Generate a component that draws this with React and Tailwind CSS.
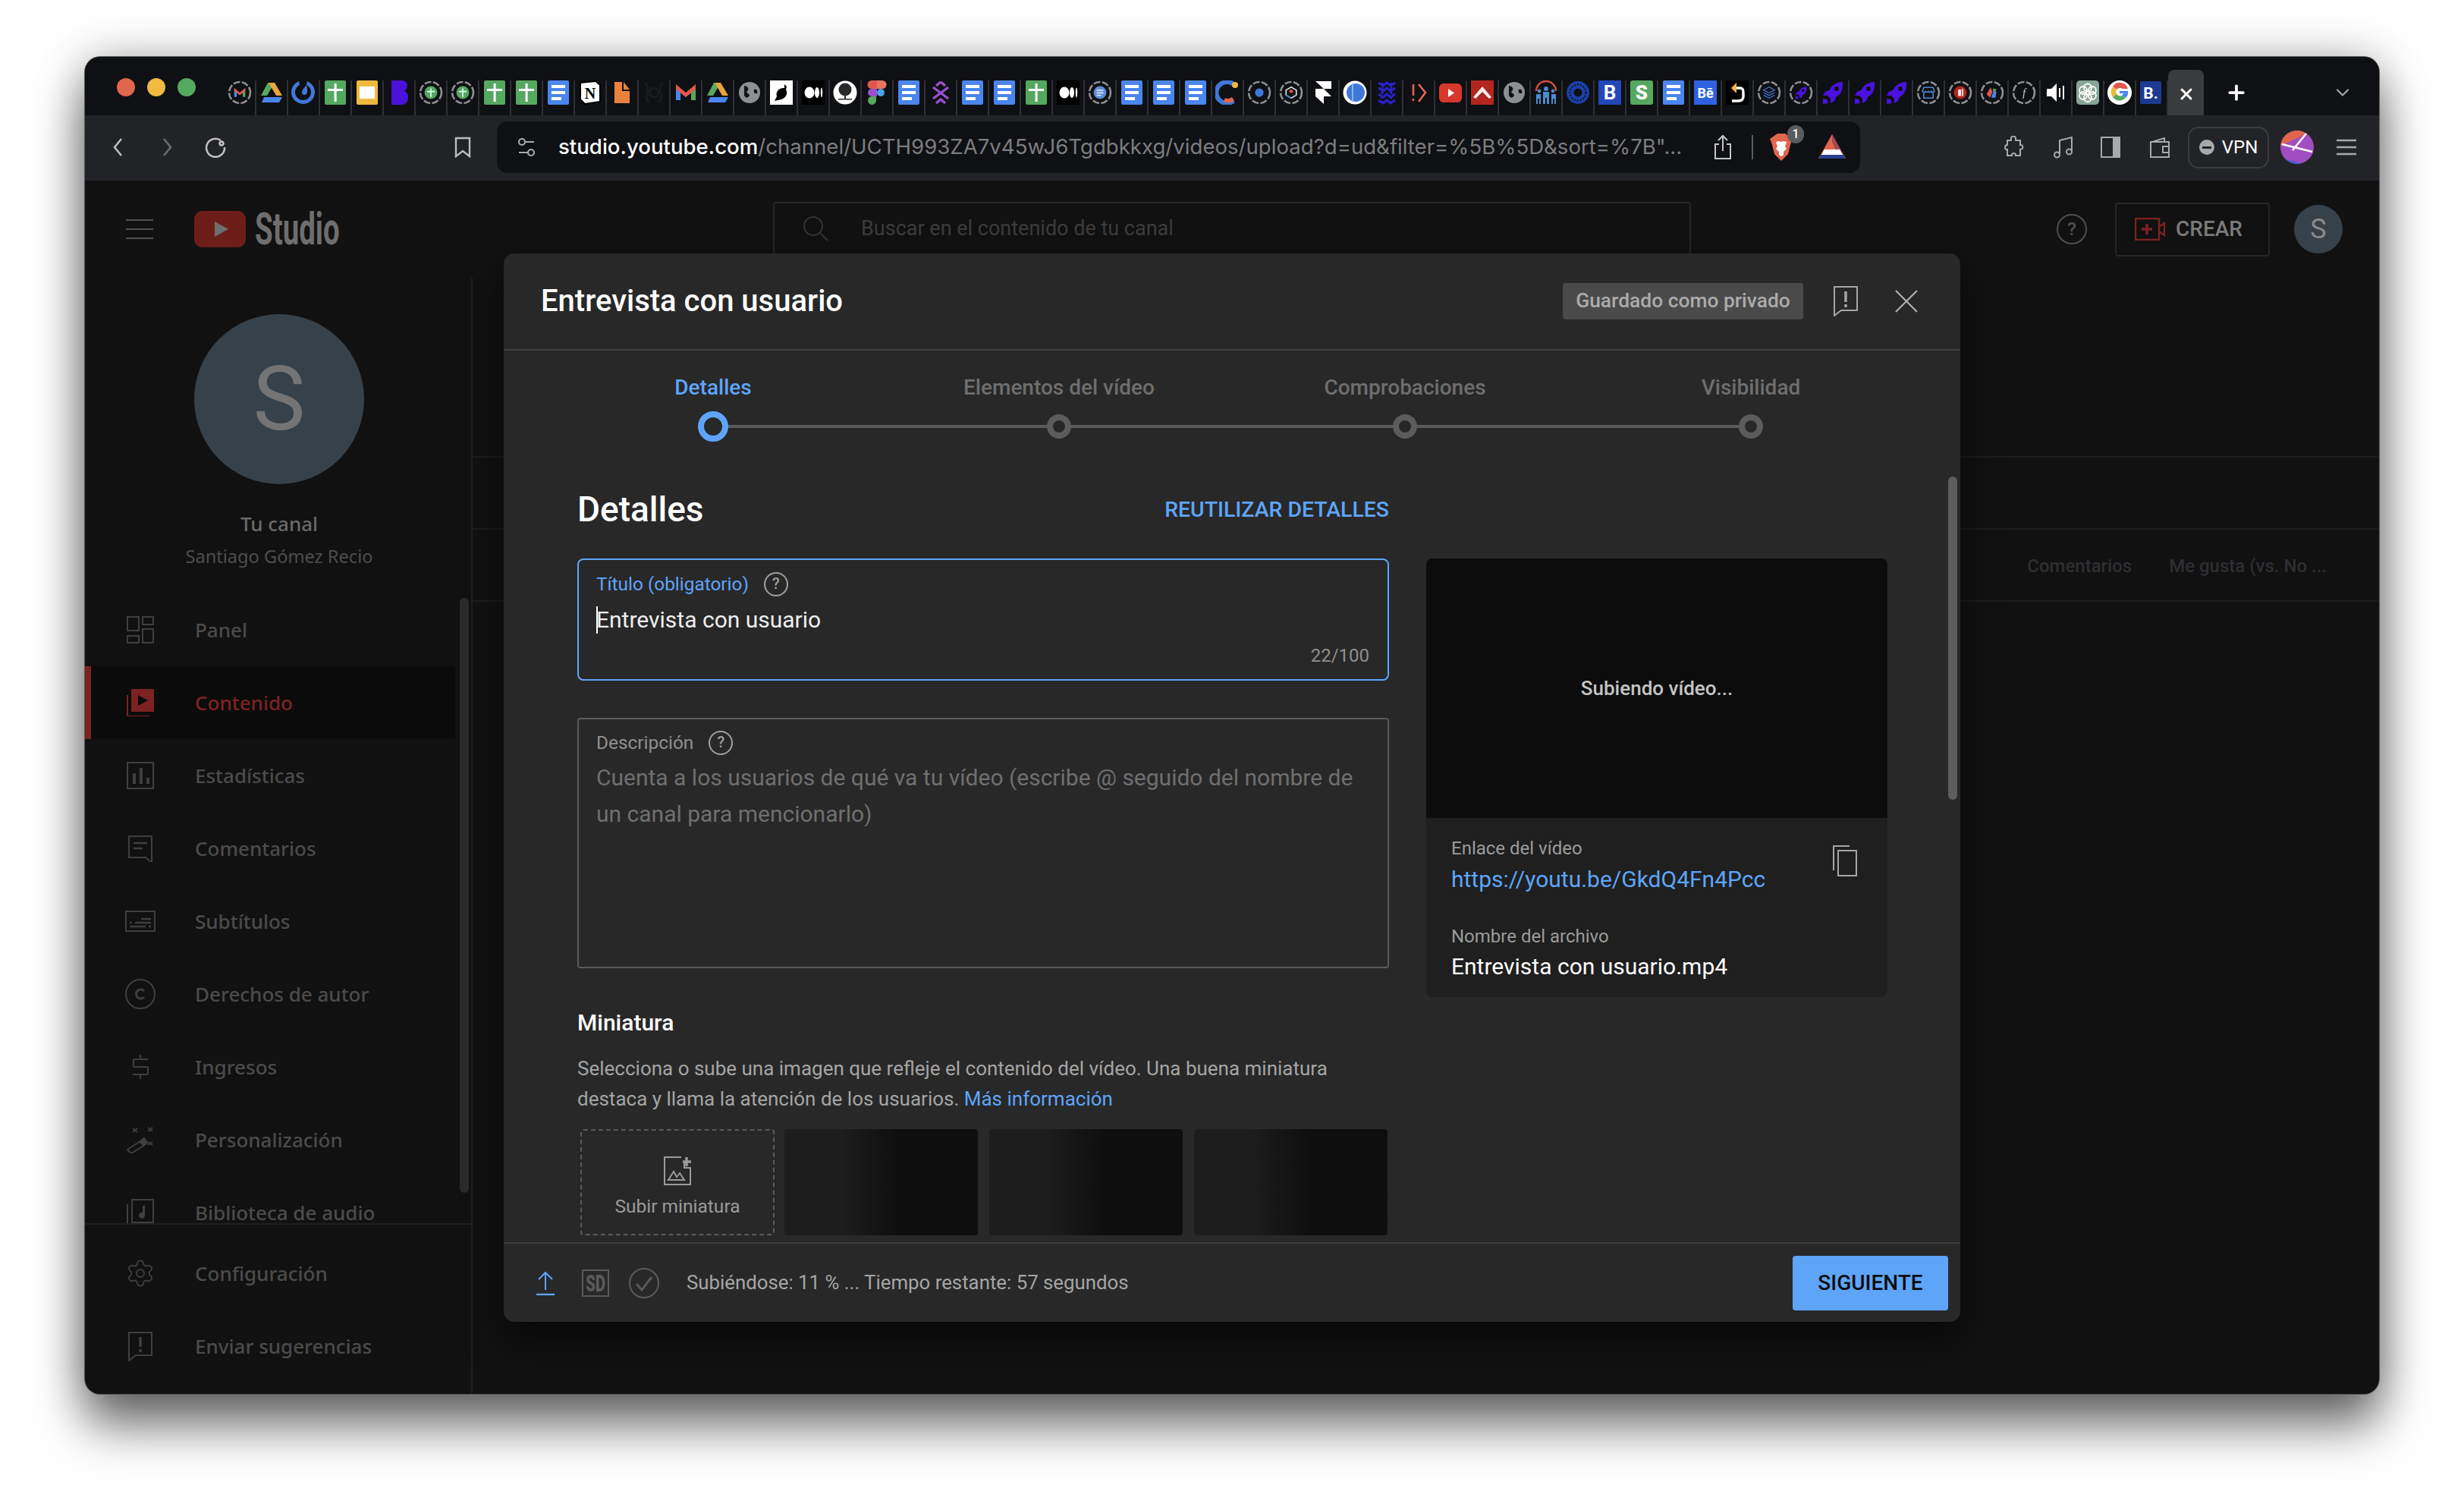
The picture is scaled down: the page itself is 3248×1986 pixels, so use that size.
import { ChevronDown, Plus, Settings, X } from 'lucide-react';

// favicon drawings, all on a 32x32 box
const ring = (inner) => (
  <>
    <circle cx="16" cy="16" r="14" fill="none" stroke="#8e9092" strokeWidth="2.6" strokeDasharray="9 2.4" />
    <g transform="translate(7 7) scale(.5625)">{inner}</g>
  </>
);
const sheet = (
  <>
    <rect x="2" width="28" height="32" rx="2" fill="#55a860" />
    <path d="M14.6 4h3v24h-3zM6 11h20v3H6z" fill="#fff" />
  </>
);
const slides = (
  <>
    <rect x="2" width="28" height="32" rx="2" fill="#f0b93f" />
    <rect x="6" y="8" width="20" height="16" fill="#fff" />
  </>
);
const docs = (
  <>
    <rect x="2" width="28" height="32" rx="2" fill="#4a86ee" />
    <path d="M7 6h18v4H7zM7 14h18v4H7zM7 22h13v4H7z" fill="#fff" />
  </>
);
const gmail = (
  <>
    <path d="M3 7v19h6V13z" fill="#4a86ee" />
    <path d="M23 13v13h6V7z" fill="#55a860" />
    <path d="M3 5l13 11L29 5v7L16 22 3 12z" fill="#e0584d" />
  </>
);
const drive = (
  <>
    <path d="M11 3h9L10 20H2z" fill="#55a860" />
    <path d="M20 3l10 17h-8L12 3z" fill="#e8a33d" />
    <path d="M6 22h24l-4 7H3z" fill="#4a86ee" />
  </>
);
const globe = (
  <>
    <circle cx="16" cy="16" r="14" fill="#8b9092" />
    <path d="M9 7c5 1 7 4 4 7-3 2 3 3 3 6-3 4-5 3-7 0zM22 12c4-1 5 2 4 5-3 1-5-1-4-5z" fill="#101114" />
  </>
);
const medium = (
  <>
    <rect x="1" width="30" height="32" fill="#000" />
    <ellipse cx="11" cy="16" rx="6.5" ry="7.5" fill="#fff" />
    <ellipse cx="21" cy="16" rx="3" ry="7" fill="#fff" />
    <ellipse cx="27" cy="16" rx="1.2" ry="6.5" fill="#fff" />
  </>
);
const greenCross = (
  <>
    <circle cx="16" cy="16" r="15" fill="#55a860" />
    <path d="M14.5 6h3v20h-3zM7 12h18v3H7z" fill="#dfe" />
  </>
);
const rocket = <path d="M29 2c-8 0-14 4-18 11l-5 2-3 5h6l4 4v6l5-3 2-5c7-4 10-11 9-20zM21 8a3 3 0 1 1 0 6 3 3 0 0 1 0-6zM3 24l5 1 2 5-7 1z" fill="#4a12e0" fillRule="evenodd" />;

const favicons = [
  ring(gmail),
  drive,
  <>
    <path d="M21 1a15.5 15.5 0 1 1-11 0l1 5a10.5 10.5 0 1 0 9 0z" fill="#3f78d8" />
    <path d="M20 6c1 5 2 9 0 12-2 2-6 1-6-2 0-4 4-7 6-10z" fill="#3f78d8" />
  </>,
  sheet,
  slides,
  <path d="M6 0h14c8 0 9 10 3 14 8 3 6 18-3 18H6z" fill="#4a12d8" />,
  ring(greenCross),
  ring(greenCross),
  sheet,
  sheet,
  docs,
  <>
    <path d="M3 3l20-2 6 5v22L9 31l-6-6z" fill="#fff" stroke="#000" strokeWidth="2" />
    <text x="16" y="24" textAnchor="middle" fontSize="20" fontWeight="700" fontFamily="Liberation Serif, serif" fill="#000">N</text>
  </>,
  <path d="M6 2h10v12h10v16H6zM18 2l8 10h-8z" fill="#e8823d" />,
  <g fill="none" stroke="#1b1c1f" strokeWidth="2.5">
    <circle cx="16" cy="16" r="6" />
    <path d="M4 3c4 4 5 7 3 13s-1 9 3 13M28 3c-4 4-5 7-3 13s1 9-3 13" />
  </g>,
  gmail,
  drive,
  globe,
  <>
    <rect x="1" width="30" height="32" fill="#fff" />
    <path d="M20 5l3 3-1 4c3 5 0 11-6 13l-9 2 3-6c-2-6 3-12 10-11z" fill="#000" />
  </>,
  medium,
  <>
    <circle cx="16" cy="16" r="15.5" fill="#fff" />
    <circle cx="16" cy="12" r="8.5" fill="#2a2a2a" />
    <path d="M15 14h2v10h-2zM7 24h18v1.5H7z" fill="#2a2a2a" />
  </>,
  <>
    <path d="M9 0h7v11H9a5.5 5.5 0 0 1 0-11z" fill="#e0584d" />
    <path d="M16 0h7a5.5 5.5 0 0 1 0 11h-7z" fill="#e8755d" />
    <path d="M9 11h7v10H9a5 5 0 0 1 0-10z" fill="#9a4fd0" />
    <circle cx="21" cy="16" r="5" fill="#4aa3e8" />
    <path d="M9 21h6v6a5.5 5.5 0 1 1-6-6z" fill="#55a860" />
  </>,
  docs,
  <path d="M16 2l6 5M16 2l-6 5M6 9l20 15M26 9L6 24M10 30l6-5 6 5" fill="none" stroke="#9a4fd0" strokeWidth="3.4" />,
  docs,
  docs,
  sheet,
  medium,
  ring(
    <>
      <circle cx="16" cy="16" r="15" fill="#5b8bd8" />
      <path d="M8 9h16v3H8zM8 15h16v3H8zM8 21h11v3H8z" fill="#dde" />
    </>,
  ),
  docs,
  docs,
  docs,
  <>
    <path d="M24 5a14 14 0 1 0 0 22" fill="none" stroke="#3f78d8" strokeWidth="6" />
    <path d="M11 28a14 14 0 0 0 14-1l-3-5c-3 2-6 3-9 1z" fill="#e0664d" />
    <circle cx="26" cy="6" r="4" fill="#f0b93f" />
  </>,
  ring(<circle cx="16" cy="16" r="10" fill="#3f78d8" />),
  ring(
    <>
      <path d="M16 3l12 7v12l-12 7-12-7V10z" fill="none" stroke="#ddd" strokeWidth="3" />
      <path d="M4 22l12 7" stroke="#3f78d8" strokeWidth="3" />
      <circle cx="16" cy="13" r="4" fill="#e0584d" />
    </>,
  ),
  <path d="M6 1h21v10H17zM6 11h11l10 10H17v10L6 21z" fill="#fff" />,
  <>
    <circle cx="16" cy="16" r="15.5" fill="#fff" />
    <circle cx="17" cy="16" r="12" fill="#3f78d8" />
    <path d="M13 4v24" stroke="#8ab4f0" strokeWidth="2" />
  </>,
  <g fill="none" stroke="#2a20c8" strokeWidth="3.2">
    <path d="M5 3l6 4 5-4 5 4 6-4M5 10l6 4 5-4 5 4 6-4M5 18l6 4 5-4 5 4 6-4M5 26l6 4 5-4 5 4 6-4" />
    <path d="M10 3v27M22 3v27" strokeDasharray="3 3" />
  </g>,
  <g fill="none" stroke="#e0664d" strokeWidth="2.6">
    <path d="M9 5v15M9 24v3M16 5l9 11-9 12" />
  </g>,
  <>
    <rect x="1" y="4" width="30" height="25" rx="6" fill="#d8382b" />
    <path d="M13 11l8 5.5-8 5.5z" fill="#fff" />
  </>,
  <>
    <rect x="1" y="0" width="30" height="32" fill="#b3261e" />
    <path d="M4 22L16 8l12 14-3 2-9-9-9 9z" fill="#eee" />
  </>,
  globe,
  <g fill="#4a8ccf">
    <path d="M3 14a13 13 0 0 1 26 0" fill="none" stroke="#d8503d" strokeWidth="2.4" />
    <circle cx="16" cy="11" r="3" />
    <circle cx="7" cy="14" r="2.4" />
    <circle cx="25" cy="14" r="2.4" />
    <path d="M12 15h8v16h-3v-8h-2v8h-3zM3 18h6v13H7v-7H5v7H3zM23 18h6v13h-2v-7h-2v7h-2z" />
  </g>,
  <>
    <circle cx="16" cy="16" r="15" fill="#1c3fa8" />
    <circle cx="16" cy="16" r="5.5" fill="#101114" />
    <circle cx="16" cy="16" r="10.5" fill="none" stroke="#101114" strokeWidth="2" strokeDasharray="2 2" />
  </>,
  <>
    <rect x="1" width="30" height="32" fill="#2346b8" />
    <text x="16" y="25" textAnchor="middle" fontSize="26" fontWeight="700" fontFamily="Roboto, sans-serif" fill="#fff">B</text>
  </>,
  <>
    <rect x="1" width="30" height="32" rx="3" fill="#55a860" />
    <text x="16" y="25" textAnchor="middle" fontSize="26" fontWeight="900" fontFamily="Roboto, sans-serif" fill="#fff">S</text>
  </>,
  docs,
  <>
    <rect x="1" width="30" height="32" fill="#2f62e0" />
    <text x="16" y="23" textAnchor="middle" fontSize="18" fontWeight="700" fontFamily="Roboto, sans-serif" fill="#fff">Bē</text>
  </>,
  <>
    <rect x="1" width="30" height="32" fill="#000" />
    <path d="M13 10h6c5 0 5 3 5 7v4c0 5-4 6-7 6H9" fill="none" stroke="#fff" strokeWidth="3.4" />
    <path d="M15 3v14L8 10z" fill="#f0b93f" />
  </>,
  ring(<path d="M16 3l13 7-13 7-13-7zM3 16l13 7 13-7M3 22l13 7 13-7" fill="none" stroke="#3f6fc8" strokeWidth="2.4" />),
  ring(rocket),
  rocket,
  rocket,
  rocket,
  ring(
    <path d="M5 4h22l3 9c-2 3-5 3-7 0-2 3-5 3-7 0-2 3-5 3-7 0-2 3-5 3-7 0zM5 16v13h22V16" fill="none" stroke="#4a8ccf" strokeWidth="2.8" />,
  ),
  ring(
    <>
      <circle cx="16" cy="16" r="15" fill="#b3261e" />
      <path d="M11 9h7v15h-7zM20 7h3v17h-3z" fill="#eee" />
    </>,
  ),
  ring(
    <>
      <path d="M3 20l9-16 5 10-6 14z" fill="#e0584d" />
      <path d="M14 28l6-18 6 4-2 14z" fill="#4a86ee" />
      <path d="M18 6l8 2-3 6-5-2z" fill="#55a860" />
    </>,
  ),
  ring(
    <text x="16" y="25" textAnchor="middle" fontSize="26" fontStyle="italic" fontFamily="Liberation Serif, serif" fill="#ccc">f</text>,
  ),
  <path d="M4 11h6l7-7v24l-7-7H4zM20 10h2v12h-2zM25 7h2v18h-2z" fill="#fff" />,
  <>
    <rect x="1" width="30" height="32" rx="5" fill="#86a596" />
    <g fill="none" stroke="#fff" strokeWidth="1.8">
      <circle cx="16" cy="9.5" r="5" />
      <circle cx="10" cy="13" r="5" />
      <circle cx="22" cy="13" r="5" />
      <circle cx="10" cy="20" r="5" />
      <circle cx="22" cy="20" r="5" />
      <circle cx="16" cy="23" r="5" />
    </g>
  </>,
  <>
    <circle cx="16" cy="16" r="16" fill="#fff" />
    <path d="M16 11h11a11 11 0 0 0-20-3l5 4a6 6 0 0 1 8-1z" fill="#e0584d" />
    <path d="M7 8a11 11 0 0 0 0 14l5-4a6 6 0 0 1 0-6z" fill="#f0b93f" />
    <path d="M7 22a11 11 0 0 0 17 1l-5-3a6 6 0 0 1-7-2z" fill="#55a860" />
    <path d="M16 14h11c1 4-1 7-3 9l-5-3c1-1 2-2 2-3h-5z" fill="#4a86ee" />
  </>,
  <>
    <rect x="1" y="1" width="28" height="30" rx="2" fill="#1c3a94" />
    <text x="15" y="24" textAnchor="middle" fontSize="21" fontWeight="700" fontFamily="Roboto, sans-serif" fill="#fff">B.</text>
  </>,
];

const Fav = ({ children }) => (
  <svg width="32" height="32" viewBox="0 0 32 32">
    {children}
  </svg>
);

const Icon = ({ size = 36, h, stroke = '#3f3f3f', sw = 2, children, box }) => (
  <svg
    width={size}
    height={h || size}
    viewBox={box || `0 0 ${size} ${h || size}`}
    fill="none"
    stroke={stroke}
    strokeWidth={sw}
    className="shrink-0"
  >
    {children}
  </svg>
);

const navItems = [
  {
    label: 'Panel',
    icon: (
      <Icon>
        <path d="M1 1h15v18H1zM1 26h15v9H1zM21 1h14v10H21zM21 17h14v18H21z" />
      </Icon>
    ),
  },
  {
    label: 'Contenido',
    active: true,
    icon: (
      <Icon stroke="#7d2222">
        <rect x="6" y="0" width="30" height="30" fill="#7d2222" stroke="none" />
        <path d="M15 8l13 7-13 7z" fill="#0b0b0b" stroke="none" />
        <path d="M1 8v28h29" />
      </Icon>
    ),
  },
  {
    label: 'Estadísticas',
    icon: (
      <Icon>
        <path d="M1 1h34v34H1z" />
        <path d="M8 15h4v14H8zM17 8h4v21h-4zM26 21h4v8h-4z" fill="#3f3f3f" stroke="none" />
      </Icon>
    ),
  },
  {
    label: 'Comentarios',
    icon: (
      <Icon>
        <path d="M3 2h30v35l-8-7H3z" />
        <path d="M9 11h18M9 18h12" strokeWidth="2.5" />
      </Icon>
    ),
  },
  {
    label: 'Subtítulos',
    icon: (
      <Icon size={40} h={30}>
        <path d="M1 2h38v26H1z" />
        <path d="M21 12h13M6 17h3M13 17h21M6 22h21M31 22h3" strokeWidth="2.4" />
      </Icon>
    ),
  },
  {
    label: 'Derechos de autor',
    icon: (
      <Icon size={40}>
        <circle cx="20" cy="20" r="19" />
        <path d="M25 16a6 6 0 1 0 0 8" strokeWidth="3" />
      </Icon>
    ),
  },
  {
    label: 'Ingresos',
    icon: (
      <Icon size={22} h={36}>
        <path d="M21 8H3a1 1 0 0 0-1 1v8a1 1 0 0 0 1 1h17a1 1 0 0 1 1 1v8a1 1 0 0 1-1 1H1M11 8V2M11 34v-6" />
      </Icon>
    ),
  },
  {
    label: 'Personalización',
    icon: (
      <Icon size={36} h={36}>
        <path d="M1 31l20-13 4 6-19 12z" />
        <path d="M17 21l6-5 4 6-5 3z" fill="#3f3f3f" />
        <path d="M8 3l6 5M14 3l-6 5M28 2l6 5M34 2l-6 5M28 21l6 4M34 21l-6 4" />
      </Icon>
    ),
  },
  {
    label: 'Biblioteca de audio',
    icon: (
      <Icon size={36}>
        <path d="M7 1h28v30H7zM1 7v29" />
        <path d="M24 9v13a4 4 0 1 1-3-4V9h7" fill="#3f3f3f" stroke="none" />
      </Icon>
    ),
  },
];

const NavRow = ({ label, icon, active }) => (
  <div className={`relative flex h-[96px] w-[488px] shrink-0 items-center ${active ? 'bg-[#0b0b0b]' : ''}`}>
    {active && <div className="absolute left-0 top-0 h-full w-[8px] bg-[#7d2222]" />}
    <div className="flex w-[145px] justify-center">
      <div className="flex w-[40px] justify-center">{icon}</div>
    </div>
    <span className={`text-[26px] font-medium font-['Noto_Sans',sans-serif] ${active ? 'text-[#7d2222]' : 'text-[#4b4b4b]'}`}>
      {label}
    </span>
  </div>
);

const HelpIcon = ({ size = 32, color = '#a0a0a0' }) => (
  <span
    className="flex shrink-0 items-center justify-center rounded-full border-2 font-medium"
    style={{ width: size, height: size, borderColor: color, color, fontSize: size * 0.62 }}
  >
    ?
  </span>
);

const Thumb = () => (
  <div className="h-[140px] w-[255px] rounded-[4px] bg-gradient-to-r from-[#1d1d1d] from-30% to-[#0e0e0e] to-60%" />
);

const StepDot = ({ active }) =>
  active ? (
    <div className="h-[40px] w-[40px] shrink-0 rounded-full border-[8px] border-[#5ea5fa]" />
  ) : (
    <div className="h-[32px] w-[32px] shrink-0 rounded-full border-[8px] border-[#5c5c5c]" />
  );

const Modal = () => (
  <div className="absolute left-[552px] top-[96px] flex h-[1408px] w-[1920px] flex-col rounded-[14px] bg-[#282828] shadow-[0_24px_50px_rgba(0,0,0,0.55)]">
    <div className="flex h-[128px] shrink-0 items-center border-b-2 border-[#3f3f3f] pl-[49px] pr-[56px]">
      <h1 className="text-[40px] font-medium text-white">Entrevista con usuario</h1>
      <div className="ml-auto flex h-[48px] w-[317px] items-center justify-center rounded-[4px] bg-[#4a4a4a] text-[26.4px] font-medium text-[#ababab]">
        Guardado como privado
      </div>
      <svg className="ml-[40px]" width="32" height="40" viewBox="0 0 32 40" fill="none" stroke="#a5a5a5" strokeWidth="2">
        <path d="M1 1h30v31H10l-9 7z" />
        <path d="M16 7v14M16 24v4" strokeWidth="3.5" />
      </svg>
      <svg className="ml-[49px]" width="30" height="30" viewBox="0 0 30 30" fill="none" stroke="#b5b5b5" strokeWidth="2">
        <path d="M1 1l28 28M29 1L1 29" />
      </svg>
    </div>

    <div className="relative h-[1175px] shrink-0 overflow-hidden">
      <div className="absolute left-[1904px] top-[166px] h-[426px] w-[12px] rounded-full bg-[#5c5e5e]" />

      <div className="ml-[48px] mt-[31px] grid w-[1824px] grid-cols-4 text-center text-[28px] font-medium leading-[36px] text-[#6e6e6e]">
        <span className="text-[#5ea5fa]">Detalles</span>
        <span>Elementos del vídeo</span>
        <span>Comprobaciones</span>
        <span>Visibilidad</span>
      </div>
      <div className="ml-[256px] mt-[13px] flex items-center">
        <StepDot active />
        <div className="h-[4px] w-[420px] bg-[#5c5c5c]" />
        <StepDot />
        <div className="h-[4px] w-[424px] bg-[#5c5c5c]" />
        <StepDot />
        <div className="h-[4px] w-[424px] bg-[#5c5c5c]" />
        <StepDot />
      </div>

      <div className="ml-[97px] mt-[58px] flex items-start">
        <div className="w-[1070px] shrink-0">
          <div className="flex h-[60px] items-center justify-between pt-[2px]">
            <h2 className="text-[46px] font-medium text-white">Detalles</h2>
            <span className="pt-[2px] text-[28.4px] font-medium text-[#5ea5fa]">REUTILIZAR DETALLES</span>
          </div>

          <div className="relative mt-[36px] h-[161px] rounded-[8px] border-2 border-[#5ea5fa] pl-[23px] pr-[24px] pt-[16px]">
            <div className="flex h-[32px] items-center gap-[20px] text-[24.4px] text-[#5ea5fa]">
              Título (obligatorio)
              <HelpIcon />
            </div>
            <div className="mt-[11px] text-[30px] leading-[40px] text-[#eeeeee]">Entrevista con usuario</div>
            <div className="absolute left-[23px] top-[61px] h-[36px] w-[2px] bg-white" />
            <div className="mt-[12px] text-right text-[24px] leading-[30px] text-[#8f8f8f]">22/100</div>
          </div>

          <div className="mt-[49px] h-[330px] rounded-[4px] border-2 border-[#5a5a5a] pl-[23px] pt-[15px]">
            <div className="flex h-[32px] items-center gap-[20px] text-[24.4px] text-[#8f8f8f]">
              Descripción
              <HelpIcon />
            </div>
            <p className="mt-[6px] text-[30px] leading-[48px] text-[#6f6f6f]">
              Cuenta a los usuarios de qué va tu vídeo (escribe @ seguido del nombre de
              <br />
              un canal para mencionarlo)
            </p>
          </div>

          <h3 className="mt-[52px] text-[30px] font-medium leading-[40px] text-white">Miniatura</h3>
          <p className="mt-[20px] text-[26px] leading-[40px] text-[#a5a5a5]">
            Selecciona o sube una imagen que refleje el contenido del vídeo. Una buena miniatura
            <br />
            destaca y llama la atención de los usuarios. <span className="text-[#5ea5fa]">Más información</span>
          </p>

          <div className="mt-[20px] flex items-start pl-[4px]">
            <div className="flex h-[140px] w-[256px] flex-col items-center rounded-[4px] border-2 border-dashed border-[#5a5a5a] pt-[34px]">
              <svg width="38" height="38" viewBox="0 0 38 38" fill="none" stroke="#9b9b9b" strokeWidth="2">
                <path d="M24 1H2v36h34V15h-8V7" />
                <path d="M7 31l7-11 4 7 4-5 6 9z" />
                <path d="M31 1v12M26 7h11" strokeWidth="3.5" />
              </svg>
              <span className="mt-[13px] text-[24.5px] leading-[30px] text-[#9b9b9b]">Subir miniatura</span>
            </div>
            <div className="ml-[13px] flex gap-[15px]">
              <Thumb />
              <Thumb />
              <Thumb />
            </div>
          </div>
        </div>

        <div className="ml-[49px] mt-[96px] w-[608px] shrink-0 overflow-hidden rounded-[8px] bg-[#1f1f1f]">
          <div className="flex h-[342px] items-center justify-center bg-[#0c0c0c] text-[26px] font-medium text-[#c4c4c4]">
            Subiendo vídeo...
          </div>
          <div className="relative h-[236px] pl-[33px] pt-[24px]">
            <div className="text-[24px] leading-[32px] text-[#9b9b9b]">Enlace del vídeo</div>
            <div className="mt-[5px] text-[30px] leading-[40px] text-[#5ea5fa]">https://youtu.be/GkdQ4Fn4Pcc</div>
            <div className="mt-[39px] text-[24px] leading-[32px] text-[#9b9b9b]">Nombre del archivo</div>
            <div className="mt-[4px] text-[30px] leading-[40px] text-white">Entrevista con usuario.mp4</div>
            <svg className="absolute right-[40px] top-[36px]" width="32" height="41" viewBox="0 0 32 41" fill="none" stroke="#a5a5a5" strokeWidth="2">
              <path d="M22 1H1v32" />
              <path d="M7 7h24v33H7z" />
            </svg>
          </div>
        </div>
      </div>
    </div>

    <div className="flex flex-1 items-center border-t-2 border-[#3f3f3f] pl-[41px] pr-[16px]">
      <svg width="28" height="32" viewBox="0 0 28 32" fill="none" stroke="#5ea5fa" strokeWidth="2">
        <path d="M14 25V2M5 11l9-9 9 9" />
        <path d="M2 31h24" strokeWidth="2.5" />
      </svg>
      <svg className="ml-[34px]" width="36" height="36" viewBox="0 0 36 36" fill="none">
        <rect x="1" y="1" width="34" height="34" stroke="#5a5a5a" strokeWidth="2" />
        <text x="18" y="29" textAnchor="middle" fontSize="31" fontWeight="900" fontFamily="Roboto, sans-serif" fill="#5a5a5a" textLength="26" lengthAdjust="spacingAndGlyphs">SD</text>
      </svg>
      <svg className="ml-[26px]" width="40" height="40" viewBox="0 0 40 40" fill="none" stroke="#5a5a5a" strokeWidth="2">
        <circle cx="20" cy="20" r="19" />
        <path d="M10 21l7 8 13-17" strokeWidth="3" />
      </svg>
      <span className="ml-[36px] text-[25.8px] text-[#a5a5a5]">Subiéndose: 11 % ... Tiempo restante: 57 segundos</span>
      <button className="ml-auto flex h-[72px] w-[205px] items-center justify-center rounded-[4px] bg-[#5ea5fa] text-[28px] font-medium text-[#0d0d0d]">
        SIGUIENTE
      </button>
    </div>
  </div>
);

const TabBar = () => (
  <div className="flex h-[77px] shrink-0 items-end rounded-t-[20px] bg-[#0f1013]">
    <div className="mb-[25px] ml-[42px] flex gap-[16px]">
      <div className="h-[24px] w-[24px] rounded-full bg-[#e0664d]" />
      <div className="h-[24px] w-[24px] rounded-full bg-[#f0b93f]" />
      <div className="h-[24px] w-[24px] rounded-full bg-[#55a860]" />
    </div>
    <div className="ml-[38px] flex">
      {favicons.map((f, i) => (
        <div key={i} className="flex h-[46px] w-[42px] justify-center border-r-2 border-[#2f3033]">
          <Fav>{f}</Fav>
        </div>
      ))}
    </div>
    <div className="flex h-[60px] w-[47px] items-center justify-center rounded-t-[8px] bg-[#3a3b3d] pt-[4px] text-white">
      <X size={24} strokeWidth={3} />
    </div>
    <Plus className="mb-[15px] ml-[28px] text-white" size={30} strokeWidth={3} />
    <ChevronDown className="mb-[16px] ml-[111px] text-[#a0a0a0]" size={28} strokeWidth={2} />
  </div>
);

const Toolbar = () => (
  <div className="flex h-[86px] shrink-0 items-center bg-[#222327] pb-[2px] text-[#a8a9ab]">
    <svg className="ml-[30px]" width="28" height="28" viewBox="0 0 28 28" fill="none" stroke="#bdbdbd" strokeWidth="2.6">
      <path d="M18 3L9 14l9 11" />
    </svg>
    <svg className="ml-[36px]" width="28" height="28" viewBox="0 0 28 28" fill="none" stroke="#6a6b6e" strokeWidth="2.6">
      <path d="M10 3l9 11-9 11" />
    </svg>
    <svg className="ml-[36px]" width="28" height="28" viewBox="0 0 28 28" fill="none" stroke="#bdbdbd" strokeWidth="2.6">
      <path d="M21 5a12 12 0 1 0 5 9" />
      <circle cx="22" cy="9" r="2.4" />
    </svg>
    <svg className="ml-[298px]" width="28" height="28" viewBox="0 0 28 28" fill="none" stroke="#bdbdbd" strokeWidth="2.4">
      <path d="M5 2h18v24l-9-7-9 7z" />
    </svg>

    <div className="ml-[31px] flex h-[68px] w-[1797px] shrink-0 items-center rounded-[14px] bg-[#0f1013] pl-[27px]">
      <svg width="24" height="28" viewBox="0 0 24 28" fill="none" stroke="#a8a9ab" strokeWidth="2.2">
        <circle cx="6" cy="7" r="4" />
        <path d="M10 7h12M2 21h12" />
        <circle cx="18" cy="21" r="4" />
      </svg>
      <div className="ml-[30px] w-[1492px] shrink-0 overflow-hidden whitespace-nowrap font-['Inter',sans-serif] text-[27.6px] text-[#7c7d80]">
        <span className="font-medium text-white">studio.youtube.com</span>/channel/UCTH993ZA7v45wJ6Tgdbkkxg/videos/upload?d=ud&filter=%5B%5D&sort=%7B"...
      </div>
      <svg className="ml-[31px]" width="24" height="34" viewBox="0 0 24 34" fill="none" stroke="#c5c5c5" strokeWidth="2">
        <path d="M12 22V2M6 8l6-6 6 6M7 13H2v19h20V13h-5" />
      </svg>
      <div className="ml-[26px] h-[32px] w-[2px] bg-[#5a5b5e]" />
      <div className="relative ml-[21px]">
        <svg className="block" width="32" height="38" viewBox="0 0 32 38">
          <path d="M4 6l7-5h10l7 5 3 2-2 5-1 3-3 12-9 9-9-9-3-12-1-3-2-5z" fill="#e0664d" />
          <path d="M9 12l4-1 3 1 3-1 4 1-2 6 2 3-4 4v4l-3 2-3-2v-4l-4-4 2-3z" fill="#fff" />
        </svg>
        <div className="absolute -right-[14px] -top-[10px] flex h-[24px] w-[22px] items-center justify-center rounded-full bg-[#5a5b5e] text-[16px] font-medium text-white">
          1
        </div>
      </div>
      <svg className="ml-[33px]" width="36" height="34" viewBox="0 0 36 34">
        <path d="M18 0l18 32H0z" fill="#e0664d" />
        <path d="M18 0l18 32h-8L18 10z" fill="#9c4a55" />
        <path d="M8 20h20l6 10H2z" fill="#fff" />
        <path d="M3 27h30l2 5H1z" fill="#27408f" />
      </svg>
    </div>

    <svg className="ml-[189px]" width="28" height="30" viewBox="0 0 28 30" fill="none" stroke="#a8a9ab" strokeWidth="2">
      <path d="M10 3c0-3 6-3 6 0v3h6v6c4-1 5 6 0 6v8h-6c1-4-6-4-5 0H5v-8c-4 1-4-6 0-6V6h5z" />
    </svg>
    <svg className="ml-[37px]" width="28" height="30" viewBox="0 0 28 30" fill="none" stroke="#a8a9ab" strokeWidth="2">
      <path d="M9 24V6l16-4v18" />
      <circle cx="5.5" cy="25" r="3.5" />
      <circle cx="21.5" cy="21" r="3.5" />
    </svg>
    <svg className="ml-[34px]" width="28" height="30" viewBox="0 0 28 30" fill="none" stroke="#a8a9ab" strokeWidth="2">
      <path d="M2 2h24v26H2z" />
      <path d="M18 2h8v26h-8z" fill="#a8a9ab" />
    </svg>
    <svg className="ml-[37px]" width="28" height="30" viewBox="0 0 28 30" fill="none" stroke="#a8a9ab" strokeWidth="2">
      <path d="M4 8l16-5v5M2 8h24v20H2zM26 14h-8v8h8" />
    </svg>
    <div className="ml-[23px] flex h-[55px] w-[107px] shrink-0 items-center justify-center gap-[10px] rounded-[14px] border-2 border-[#3a3c40] text-[24px] text-white">
      <span className="flex h-[20px] w-[20px] items-center justify-center rounded-full bg-[#a8a9ab]">
        <span className="h-[3px] w-[12px] bg-[#222327]" />
      </span>
      VPN
    </div>
    <div className="ml-[15px] h-[44px] w-[44px] overflow-hidden rounded-full bg-[#a04fc0]">
      <svg width="44" height="44" viewBox="0 0 44 44">
        <path d="M0 0h44L0 20z" fill="#e0664d" />
        <path d="M0 36l30 8H0z" fill="#3f5fd8" />
        <path d="M2 18l40 10M34 4L16 26" stroke="#fff" strokeWidth="2.5" />
      </svg>
    </div>
    <svg className="ml-[29px]" width="28" height="28" viewBox="0 0 28 28" stroke="#a8a9ab" strokeWidth="2.4">
      <path d="M1 5h26M1 14h26M1 23h26" />
    </svg>
  </div>
);

const StudioHeader = () => (
  <div className="flex h-[128px] shrink-0 items-center">
    <div className="ml-[54px] flex h-[26px] w-[36px] flex-col justify-between">
      <div className="h-[2px] bg-[#4f4f4f]" />
      <div className="h-[2px] bg-[#4f4f4f]" />
      <div className="h-[2px] bg-[#4f4f4f]" />
    </div>
    <svg className="ml-[54px]" width="68" height="48" viewBox="0 0 68 48">
      <rect width="68" height="48" rx="11" fill="#6e1e18" />
      <path d="M27 14l18 10-18 10z" fill="#6e6e6e" />
    </svg>
    <span className="ml-[12px] w-[111px] origin-left scale-x-[0.64] text-[60px] font-bold leading-[60px] tracking-[0px] text-[#6e6e6e]">
      Studio
    </span>
    <div className="mb-[2px] ml-[572px] flex h-[70px] w-[1210px] items-center rounded-[4px] border-2 border-[#262626] pl-[36px]">
      <svg width="36" height="36" viewBox="0 0 36 36" fill="none" stroke="#333" strokeWidth="2">
        <circle cx="15" cy="15" r="12" />
        <path d="M24 24l10 10" />
      </svg>
      <span className="ml-[42px] text-[27px] text-[#3c3c3c]">Buscar en el contenido de tu canal</span>
    </div>
    <div className="ml-auto flex items-center pr-[48px]">
      <HelpIcon size={40} color="#4f4f4f" />
      <div className="ml-[37px] flex h-[71px] w-[204px] items-center rounded-[4px] border-2 border-[#262626] pl-[24px]">
        <svg width="40" height="30" viewBox="0 0 40 30" fill="none" stroke="#7d2222" strokeWidth="2.4">
          <path d="M1 1h31v28H1zM32 12l7-5v16l-7-5" />
          <path d="M16 8v14M9 15h14" strokeWidth="3.5" />
        </svg>
        <span className="ml-[14px] text-[28px] font-medium text-[#7b7b7b]">CREAR</span>
      </div>
      <div className="ml-[32px] flex h-[64px] w-[64px] items-center justify-center rounded-full bg-[#37414a] text-[36px] text-[#8a8a8a]">
        S
      </div>
    </div>
  </div>
);

const Sidebar = () => (
  <div className="relative flex w-[511px] shrink-0 flex-col border-r-2 border-[#1f1f1f]">
    <div className="h-[1246px] shrink-0 overflow-hidden">
      <div className="flex h-[416px] flex-col items-center pl-[3px] pt-[48px]">
        <div className="flex h-[224px] w-[224px] shrink-0 items-center justify-center rounded-full bg-[#37414a] text-[116px] leading-none text-[#747474]">
          S
        </div>
        <div className="mt-[34px] font-['Noto_Sans',sans-serif] text-[26px] font-medium leading-[36px] text-[#6a6a6a]">Tu canal</div>
        <div className="mt-[9px] font-['Noto_Sans',sans-serif] text-[23.6px] leading-[32px] text-[#4d4d4d]">Santiago Gómez Recio</div>
      </div>
      {navItems.map((item) => (
        <NavRow key={item.label} {...item} />
      ))}
    </div>
    <div className="absolute left-[494px] top-[422px] h-[784px] w-[12px] rounded-full bg-[#2b2b2b]" />
    <div className="border-t-2 border-[#1f1f1f] pt-[16px]">
      <NavRow
        label="Configuración"
        icon={<Settings size={40} color="#3f3f3f" strokeWidth={1.1} />}
      />
      <NavRow
        label="Enviar sugerencias"
        icon={
          <Icon size={34} h={40}>
            <path d="M2 2h30v30H11l-9 7z" />
            <path d="M17 8v13M17 24v4" strokeWidth="3.5" />
          </Icon>
        }
      />
    </div>
  </div>
);

const App = () => (
  <div className="h-[1986px] w-[3248px] overflow-hidden bg-white pl-[112px] pt-[75px] font-['Roboto',sans-serif]">
    <div className="flex h-[1762px] w-[3024px] flex-col rounded-[20px] bg-[#111111] shadow-[0_0_0_1px_#5a5a5a,0_42px_64px_rgba(0,0,0,0.55),0_0_60px_rgba(0,0,0,0.28)]">
      <TabBar />
      <Toolbar />
      <div className="relative flex min-h-0 flex-1 flex-col overflow-hidden rounded-b-[20px]">
        <StudioHeader />
        <div className="flex min-h-0 flex-1">
          <Sidebar />
          <div className="min-w-0 flex-1">
            <div className="h-[237px] border-b-2 border-[#1c1c1c]" />
            <div className="h-[95px] border-b-2 border-[#1c1c1c]" />
            <div className="flex h-[95px] items-center justify-end gap-[49px] border-b-2 border-[#1c1c1c] pr-[69px] pt-[2px] text-[24px] font-medium text-[#2e2f33]">
              <span>Comentarios</span>
              <span>Me gusta (vs. No ...</span>
            </div>
          </div>
        </div>
        <Modal />
      </div>
    </div>
  </div>
);

export default App;
